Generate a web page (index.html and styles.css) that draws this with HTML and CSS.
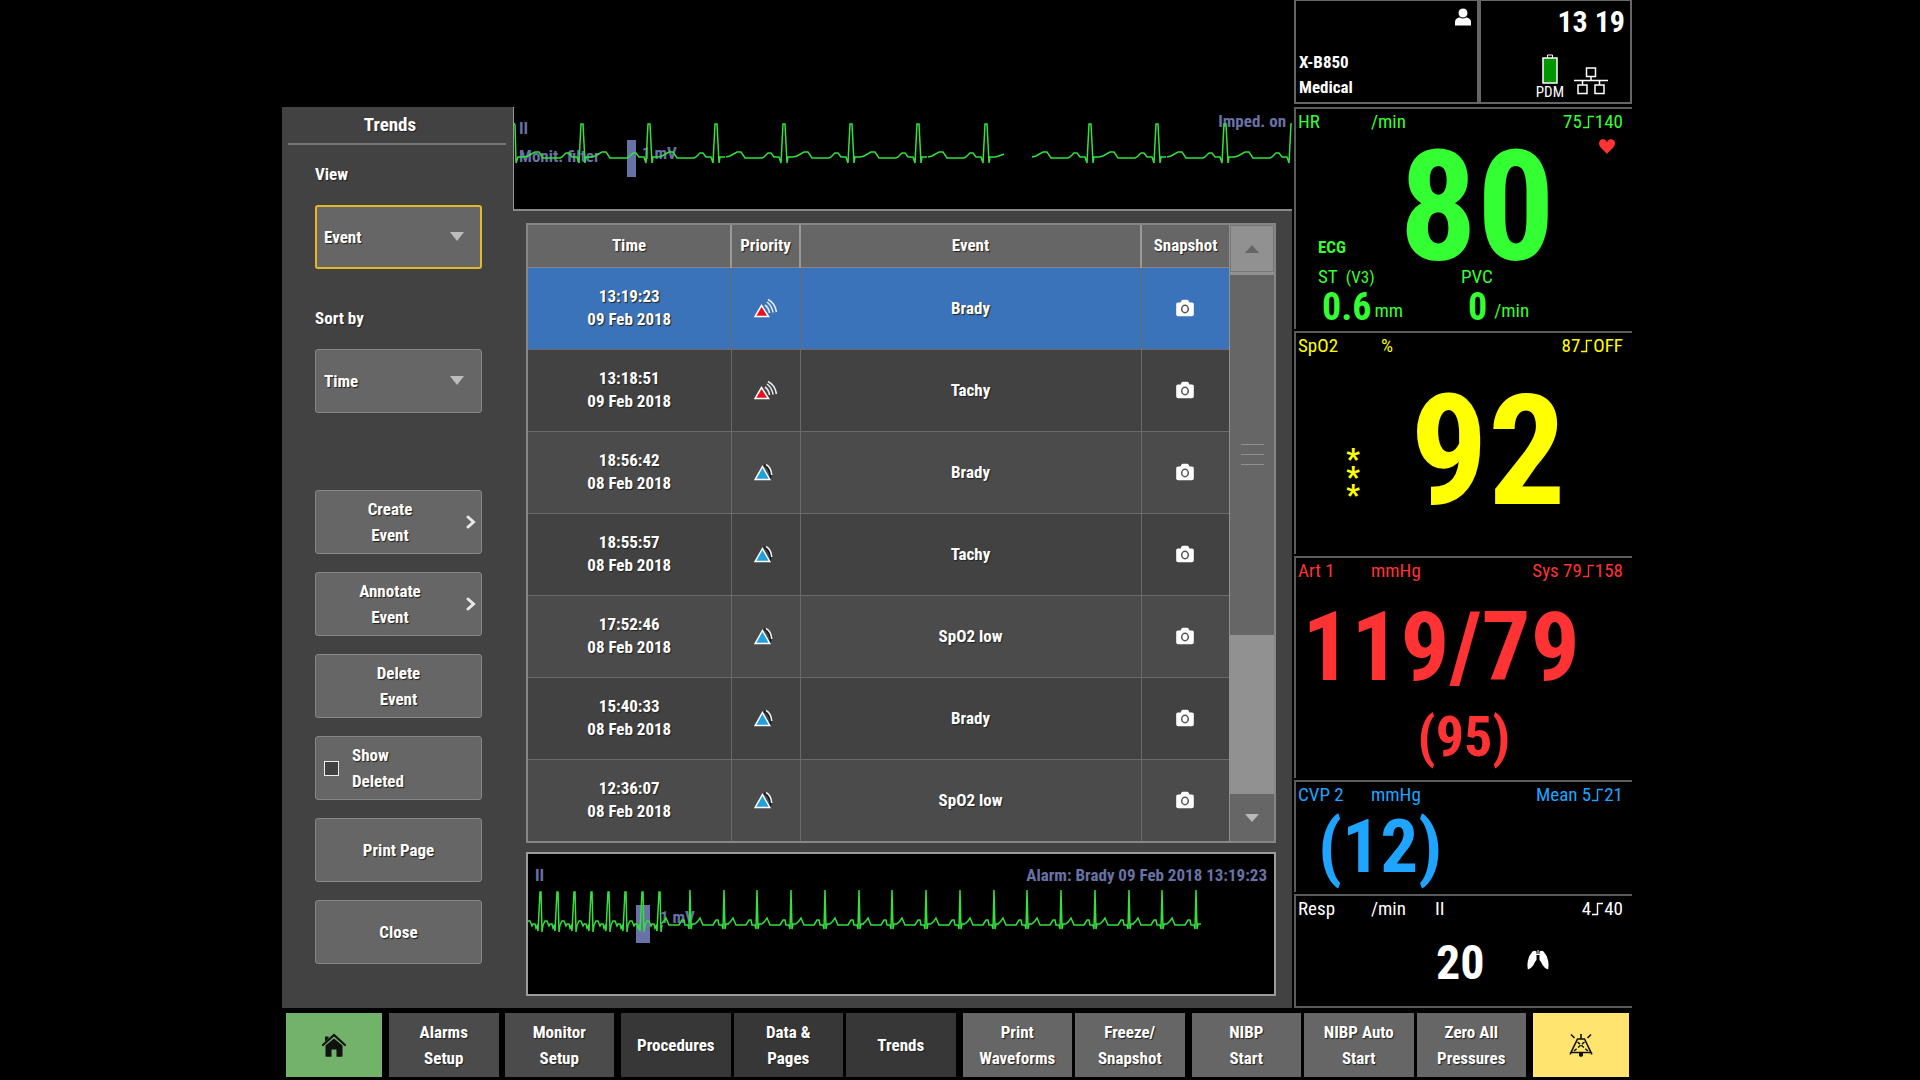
FILE: index.html
```html
<!DOCTYPE html>
<html lang="en">
<head>
<meta charset="utf-8">
<meta name="viewport" content="width=device-width, initial-scale=1">
<title>Trends</title>
<link rel="stylesheet" href="styles.css">
</head>
<body>
<svg class="defs" aria-hidden="true">
  <defs>
    <path id="beat" d="M-58 50 L-54 49 L-47 45 L-43 45 L-39 51 L-22 51 L-20 50 L-16 46 L-13 46 L-10 50 L-5 50 L-3 56 L-1 17 L1 17 L3 56 L4 50 L9 50"/>
    <path id="beat-slow" d="M-29 70 L-26 67 L-24 64 L-21 71 L-11 71 L-8 66 L-6 66 L-5 71 L-2 71 L-1 75 L0 36 L1 75 L2 70 L5 70"/>
    <path id="beat-fast" d="M-14 71 L-12 67 L-10 67 L-8 72 L-7 70 L-5 70 L-4 74 L-3 72 L-2 77 L0 38 L1 38 L2 78 L3 71"/>
    <symbol id="prio-high" viewBox="0 0 24 20">
      <path d="M7.500 7.500 L14.500 18.500 H1 Z" fill="#e8131a" stroke="#fff" stroke-width="1.500"/>
      <path d="M11 7 Q15 10 15.500 15 M13 4 Q18 8 19 14.500 M14 1.500 Q21 5 22.500 14" fill="none" stroke="#e4e9ef" stroke-width="1.600"/>
    </symbol>
    <symbol id="prio-low" viewBox="0 0 24 20">
      <path d="M10 3 Q15 5 16.500 12 Q17 15 15.500 17" fill="none" stroke="#1b1b1b" stroke-width="2"/>
      <path d="M12 2.500 Q17 5 17.700 13" fill="none" stroke="#eee" stroke-width="1.600"/>
      <path d="M8.500 4.500 L15.800 17.500 H1.200 Z" fill="#22a0dc" stroke="#fff" stroke-width="1.500"/>
    </symbol>
    <symbol id="camera" viewBox="0 0 18 18">
      <path d="M2 3.500 H4.500 L5.500 1.500 Q6 .8 7 .8 H11 Q12 .8 12.500 1.500 L13.500 3.500 H16 Q17.800 3.500 17.800 5 V15.500 Q17.800 17.300 16 17.300 H2 Q.2 17.300 .2 15.500 V5 Q.2 3.500 2 3.500 Z" fill="#fff"/>
      <ellipse cx="9" cy="10" rx="3.300" ry="3.700" fill="none" stroke="#555" stroke-width="1.500"/>
    </symbol>
    <symbol id="step" viewBox="0 0 11 14">
      <path d="M0 12.500 H5.500 V1.500 H11" fill="none" stroke="currentColor" stroke-width="1.400"/>
    </symbol>
    <symbol id="chevron" viewBox="0 0 10 14">
      <path d="M2 2 L7.500 7 L2 12" fill="none" stroke="#e8e8e8" stroke-width="3" stroke-linecap="round"/>
    </symbol>
  </defs>
</svg>

<div class="monitor">
  <main class="workspace">
    <form class="sidebar">
      <h1 class="sidebar-title">Trends</h1>
      <div class="controls">
        <label class="field-label" for="view">View</label>
        <div class="select-wrap">
          <select id="view" class="box select focused"><option>Event</option></select>
        </div>
        <label class="field-label" for="sort">Sort by</label>
        <div class="select-wrap">
          <select id="sort" class="box select"><option>Time</option></select>
        </div>
        <div class="actions">
          <button type="button" class="box more"><span>Create<br>Event</span><svg class="chevron"><use href="#chevron"/></svg></button>
          <button type="button" class="box more"><span>Annotate<br>Event</span><svg class="chevron"><use href="#chevron"/></svg></button>
          <button type="button" class="box">Delete<br>Event</button>
          <label class="box check"><input type="checkbox" class="tick"><span>Show<br>Deleted</span></label>
          <button type="button" class="box">Print Page</button>
          <button type="button" class="box">Close</button>
        </div>
      </div>
    </form>

    <div class="content">
      <svg class="live-wave" role="img" aria-label="ECG lead II">
        <g class="wave-text">
          <text x="5" y="27">II</text>
          <text x="5" y="55">Monit. filter</text>
          <text x="128" y="52">1 mV</text>
          <text x="100%" y="20" dx="-6" text-anchor="end">Imped. on</text>
          <rect x="113" y="33" width="9" height="37"/>
        </g>
        <g class="trace">
          <path d="M0 16 L1 18 L2 56 L4 50 L10 50"/>
          <use href="#beat" x="68"/><use href="#beat" x="135"/><use href="#beat" x="202"/><use href="#beat" x="270"/><use href="#beat" x="337"/><use href="#beat" x="404"/><use href="#beat" x="472"/>
          <path d="M481 50 L485 49 L490 47"/>
          <use href="#beat" x="576"/><use href="#beat" x="643"/><use href="#beat" x="711"/><use href="#beat" x="778"/>
        </g>
      </svg>

      <div class="events">
        <div class="table-frame">
          <table class="event-table">
            <thead>
              <tr><th class="c-time">Time</th><th class="c-prio">Priority</th><th>Event</th><th class="c-snap">Snapshot</th></tr>
            </thead>
            <tbody>
              <tr class="selected"><td>13:19:23<br>09 Feb 2018</td><td><svg class="prio"><use href="#prio-high"/></svg></td><td>Brady</td><td><svg class="camera"><use href="#camera"/></svg></td></tr>
              <tr><td>13:18:51<br>09 Feb 2018</td><td><svg class="prio"><use href="#prio-high"/></svg></td><td>Tachy</td><td><svg class="camera"><use href="#camera"/></svg></td></tr>
              <tr><td>18:56:42<br>08 Feb 2018</td><td><svg class="prio"><use href="#prio-low"/></svg></td><td>Brady</td><td><svg class="camera"><use href="#camera"/></svg></td></tr>
              <tr><td>18:55:57<br>08 Feb 2018</td><td><svg class="prio"><use href="#prio-low"/></svg></td><td>Tachy</td><td><svg class="camera"><use href="#camera"/></svg></td></tr>
              <tr><td>17:52:46<br>08 Feb 2018</td><td><svg class="prio"><use href="#prio-low"/></svg></td><td>SpO2 low</td><td><svg class="camera"><use href="#camera"/></svg></td></tr>
              <tr><td>15:40:33<br>08 Feb 2018</td><td><svg class="prio"><use href="#prio-low"/></svg></td><td>Brady</td><td><svg class="camera"><use href="#camera"/></svg></td></tr>
              <tr><td>12:36:07<br>08 Feb 2018</td><td><svg class="prio"><use href="#prio-low"/></svg></td><td>SpO2 low</td><td><svg class="camera"><use href="#camera"/></svg></td></tr>
            </tbody>
          </table>
          <div class="scrollbar">
            <button type="button" class="scroll-btn up" aria-label="Scroll up"><svg viewBox="0 0 16 10"><path d="M8 1 L15 9 H1 Z" fill="#666"/></svg></button>
            <div class="thumb"><i></i><i></i><i></i></div>
            <div class="track"></div>
            <button type="button" class="scroll-btn down" aria-label="Scroll down"><svg viewBox="0 0 16 10"><path d="M1 1 H15 L8 9 Z" fill="#b9b9b9"/></svg></button>
          </div>
        </div>

        <svg class="snapshot-wave" role="img" aria-label="Snapshot of ECG lead II">
          <g class="wave-text">
            <text x="7" y="27">II</text>
            <text x="132" y="69">1 mV</text>
            <text x="100%" y="27" dx="-7" text-anchor="end">Alarm: Brady 09 Feb 2018 13:19:23</text>
            <rect x="108" y="51" width="14" height="38"/>
          </g>
          <g class="trace">
            <use href="#beat-fast" x="12"/><use href="#beat-fast" x="29"/><use href="#beat-fast" x="46"/><use href="#beat-fast" x="63"/><use href="#beat-fast" x="80"/><use href="#beat-fast" x="97"/><use href="#beat-fast" x="114"/><use href="#beat-fast" x="131"/>
            <use href="#beat-slow" x="162"/><use href="#beat-slow" x="196"/><use href="#beat-slow" x="229"/><use href="#beat-slow" x="263"/><use href="#beat-slow" x="297"/><use href="#beat-slow" x="331"/><use href="#beat-slow" x="364"/><use href="#beat-slow" x="398"/><use href="#beat-slow" x="432"/><use href="#beat-slow" x="466"/><use href="#beat-slow" x="499"/><use href="#beat-slow" x="533"/><use href="#beat-slow" x="567"/><use href="#beat-slow" x="601"/><use href="#beat-slow" x="634"/><use href="#beat-slow" x="668"/>
          </g>
        </svg>
      </div>
    </div>
  </main>

  <aside class="vitals">
    <div class="status">
      <div class="patient">
        <svg class="person" viewBox="0 0 16 18"><path d="M0 17.500 V14 Q0 10.500 4 9.500 H12 Q16 10.500 16 14 V17.500 Z" fill="#fff"/><circle cx="8" cy="5" r="5" fill="#fff" stroke="#000"/></svg>
        <p>X-B850<br>Medical</p>
      </div>
      <div class="system">
        <time class="clock">13 19</time>
        <div class="system-icons">
          <div class="pdm">
            <svg class="battery" viewBox="0 0 16 30"><path d="M5.500 4 V1 H10.500 V4" fill="none" stroke="#fff"/><rect x="1" y="4" width="14" height="25" fill="#009400" stroke="#fff" stroke-width="1.500"/></svg>
            <span>PDM</span>
          </div>
          <svg class="network" viewBox="0 0 34 28"><path d="M0 13.500 H34 M17 9.500 V13.500 M8.500 13.500 V18 M25.500 13.500 V18 M12.500 1 H21.500 V9.500 H12.500 Z M4 18 H13 V26.500 H4 Z M21 18 H30 V26.500 H21 Z" fill="none" stroke="#fff" stroke-width="1.500"/></svg>
        </div>
      </div>
    </div>

    <section class="vital tall hr">
      <header class="vital-head"><span>HR</span><span>/min</span><span></span><span class="limits">75<svg class="step"><use href="#step"/></svg>140</span></header>
      <div class="hr-main">
        <span class="source">ECG</span>
        <span class="n-xl">80</span>
        <svg class="heart" viewBox="0 0 16 15"><path d="M8 15 C5 11 0 8.500 0 4.300 C0 1.500 2 .3 4 .3 C6 .3 7.500 1.500 8 3.500 C8.500 1.500 10 .3 12 .3 C14 .3 16 1.500 16 4.300 C16 8.500 11 11 8 15 Z" fill="#ff3333"/></svg>
      </div>
      <div class="hr-stats">
        <div>
          <p class="stat-name">ST <small>(V3)</small></p>
          <p class="stat-value indent"><b>0.6</b><span>mm</span></p>
        </div>
        <div>
          <p class="stat-name">PVC</p>
          <p class="stat-value pvc"><b>0</b><span>/min</span></p>
        </div>
      </div>
    </section>

    <section class="vital tall spo2">
      <header class="vital-head"><span>SpO2</span><span class="pct">%</span><span></span><span class="limits">87<svg class="step"><use href="#step"/></svg>OFF</span></header>
      <div class="spo2-main">
        <span class="stars">*<br>*<br>*</span>
        <span class="n-xl">92</span>
      </div>
    </section>

    <section class="vital tall art">
      <header class="vital-head"><span>Art 1</span><span>mmHg</span><span></span><span class="limits">Sys 79<svg class="step"><use href="#step"/></svg>158</span></header>
      <p class="n-l">119/79</p>
      <p class="n-m">(95)</p>
    </section>

    <section class="vital cvp">
      <header class="vital-head"><span>CVP 2</span><span>mmHg</span><span></span><span class="limits">Mean 5<svg class="step"><use href="#step"/></svg>21</span></header>
      <p class="n-cvp">(12)</p>
    </section>

    <section class="vital resp">
      <header class="vital-head"><span>Resp</span><span>/min</span><span>II</span><span class="limits">4<svg class="step"><use href="#step"/></svg>40</span></header>
      <div class="resp-main">
        <span class="n-s">20</span>
        <svg class="lungs" viewBox="0 0 22 20"><path d="M9.500 1.500 V10 Q7.500 12 6.500 15 Q4.500 18.500 .8 19.500 Q0 15 .8 11 Q2 5 5.500 1.500 Q7.500 0 9.500 1.500 Z M12.500 1.500 V10 Q14.500 12 15.500 15 Q17.500 18.500 21.200 19.500 Q22 15 21.200 11 Q20 5 16.500 1.500 Q14.500 0 12.500 1.500 Z" fill="#fff"/><path d="M11 0 V5 M9 4.500 H13" stroke="#fff"/></svg>
      </div>
    </section>
  </aside>

  <nav class="menu">
    <button type="button" class="key home" aria-label="Home"><svg viewBox="0 0 24 24"><path d="M12 5.500 L20.500 12.500 V23 Q20.500 23.700 19.500 23.700 H14.500 V16.500 H9.500 V23.700 H4.500 Q3.500 23.700 3.500 23 V12.500 Z" fill="#111"/><path d="M1 12 L12 2 L23 12" fill="none" stroke="#111" stroke-width="2.200" stroke-linecap="round"/><path d="M3 3.500 H6.500 V5.500 L3 8.500 Z" fill="#111"/></svg></button>
    <button type="button" class="key mid group">Alarms<br>Setup</button>
    <button type="button" class="key mid near">Monitor<br>Setup</button>
    <button type="button" class="key dark group">Procedures</button>
    <button type="button" class="key dark">Data &amp;<br>Pages</button>
    <button type="button" class="key dark">Trends</button>
    <button type="button" class="key group">Print<br>Waveforms</button>
    <button type="button" class="key">Freeze/<br>Snapshot</button>
    <button type="button" class="key group">NIBP<br>Start</button>
    <button type="button" class="key">NIBP Auto<br>Start</button>
    <button type="button" class="key">Zero All<br>Pressures</button>
    <button type="button" class="key silence group" aria-label="Silence alarms"><svg viewBox="0 0 24 24"><path d="M12 1 V6 M2 1.500 L5.500 5 M22 1.500 L18.500 5 M8.500 6 H15.500 L22 19.500 H2 Z M1.500 19.500 V21.500 M22.500 19.500 V21.500" fill="none" stroke="#111" stroke-width="1.600"/><path d="M5 18 L15.500 9 M19 18 L8.500 9" stroke="#111" stroke-width="1.500" stroke-dasharray="3.500 1.800"/><path d="M10 20 H14 V23 L12 24 L10 23 Z" fill="#111"/></svg></button>
  </nav>
</div>
</body>
</html>
```
FILE: styles.css
```css
:root {
  --panel: #424242;
  --panel-alt: #4b4b4b;
  --control: #666;
  --edge: #868686;
  --line: #999;
  --note: #6872a6;
}

* {
  box-sizing: border-box;
}

body,
h1,
p {
  margin: 0;
}

body {
  background: #000;
  color: #fff;
  font-family: "Liberation Sans Narrow", "Arial Narrow", "Roboto Condensed", "Liberation Sans", sans-serif;
  font-size: 17px;
  font-weight: 700;
}

svg {
  display: block;
}

button,
select {
  font: inherit;
  color: inherit;
}

.defs {
  position: absolute;
  width: 0;
  height: 0;
}

.monitor {
  display: grid;
  grid-template-columns: minmax(0, 1fr) 338px;
  grid-template-rows: 1fr auto;
  column-gap: 2px;
  min-height: 100vh;
  padding: 0 288px 0 282px;
}

/* Trends page */

.workspace {
  display: flex;
  margin-top: 107px;
  background: var(--panel);
}

.sidebar {
  flex: 0 0 231px;
  text-shadow: 1px 1px 1px #222;
}

.sidebar-title {
  margin: 0 7px 0 6px;
  padding: 5px 14px 6px 0;
  border-bottom: 2px solid #777;
  font-size: 19px;
  line-height: 25px;
  text-align: center;
}

.controls {
  display: flex;
  flex-direction: column;
  margin: 0 31px 0 33px;
}

.field-label {
  margin-top: 17px;
  line-height: 24px;
}

.select-wrap {
  position: relative;
  margin: 19px 0;
}

.select-wrap::after {
  content: "";
  position: absolute;
  right: 18px;
  top: 27px;
  border: 7px solid transparent;
  border-top: 9px solid #bdbdbd;
  border-bottom: 0;
  pointer-events: none;
}

.box {
  display: block;
  width: 100%;
  height: 64px;
  padding: 0 8px;
  border: 1px solid var(--edge);
  border-radius: 3px;
  background: var(--control);
  line-height: 26px;
  text-align: center;
  text-shadow: inherit;
}

.select {
  appearance: none;
  text-align: left;
}

.focused {
  border: 2px solid #e3b92c;
  padding: 0 7px;
}

.select-wrap + .field-label {
  margin-top: 18px;
}

.actions {
  display: flex;
  flex-direction: column;
  gap: 18px;
  margin-top: 58px;
}

.more {
  display: grid;
  grid-template-columns: 1fr 10px;
  align-items: center;
  column-gap: 8px;
  padding: 0 5px 0 6px;
}

.chevron {
  width: 10px;
  height: 14px;
}

.check {
  display: flex;
  align-items: center;
  gap: 13px;
  text-align: left;
}

.tick {
  appearance: none;
  width: 15px;
  height: 15px;
  margin: 0;
  border: 1px solid #eee;
  background: var(--panel);
}

.content {
  flex: 1;
  min-width: 0;
}

.live-wave {
  width: 100%;
  height: 104px;
  border-left: 1px solid var(--line);
  border-bottom: 2px solid #888;
  background: #000;
}

.wave-text {
  fill: var(--note);
}

.trace {
  fill: none;
  stroke: #33e03c;
  stroke-width: 1.5;
}

.events {
  padding: 12px 16px 12px 13px;
}

.table-frame {
  display: flex;
  border: 2px solid var(--edge);
}

.event-table {
  flex: 1;
  border-collapse: collapse;
  table-layout: fixed;
  line-height: 23px;
  text-align: center;
  text-shadow: 1px 1px 1px #222;
}

.c-time { width: 203px; }
.c-prio { width: 69px; }
.c-snap { width: 88px; }

.event-table th {
  height: 42px;
  padding: 0;
  background: var(--control);
  border-left: 2px solid var(--line);
  border-bottom: 1px solid var(--edge);
}

.event-table td {
  height: 82px;
  padding: 0;
  border-left: 1px solid #6a6a6a;
  border-top: 1px solid #6a6a6a;
}

.event-table th:first-child,
.event-table td:first-child {
  border-left: 0;
}

.event-table tbody tr:nth-child(odd) {
  background: var(--panel-alt);
}

.event-table tbody tr.selected {
  background: #3a73b9;
}

.prio {
  width: 24px;
  height: 20px;
  margin: 0 auto;
}

.camera {
  width: 18px;
  height: 18px;
  margin: 0 auto;
}

.scrollbar {
  display: flex;
  flex-direction: column;
  flex: 0 0 45px;
  padding-left: 1px;
  background: #919191;
}

.scroll-btn {
  flex: 0 0 47px;
  padding: 0;
  border: 1px solid #777;
  background: #919191;
}

.scroll-btn.down {
  border: 0;
  background: var(--control);
}

.scroll-btn svg {
  width: 16px;
  height: 10px;
  margin: 0 auto;
}

.thumb {
  display: flex;
  flex: 359;
  flex-direction: column;
  align-items: center;
  justify-content: center;
  gap: 9px;
  margin-top: 3px;
  background: var(--control);
}

.thumb i {
  width: 23px;
  height: 1px;
  background: #919191;
}

.track {
  flex: 159;
}

.snapshot-wave {
  width: 100%;
  height: 144px;
  margin-top: 9px;
  border: 2px solid #9c9c9c;
  background: #000;
}

/* Vital signs */

.vitals {
  display: flex;
  flex-direction: column;
  gap: 2px;
}

.status {
  display: grid;
  grid-template-columns: 185px 1fr;
  height: 104px;
  margin-bottom: 1px;
}

.patient,
.system {
  display: flex;
  flex-direction: column;
  justify-content: space-between;
  align-items: flex-end;
  border: 2px solid #666;
  border-top-width: 1px;
}

.patient {
  padding: 7px 6px 2px 3px;
}

.patient p {
  align-self: flex-start;
  line-height: 25px;
}

.person {
  width: 16px;
  height: 18px;
}

.system {
  padding: 5px 5px 2px 0;
}

.clock {
  font-size: 30px;
  line-height: 32px;
}

.system-icons {
  display: flex;
  align-items: flex-end;
  gap: 10px;
  padding-right: 17px;
}

.pdm {
  display: flex;
  flex-direction: column;
  align-items: center;
  font-size: 15px;
  font-weight: 400;
  line-height: 16px;
}

.battery {
  width: 16px;
  height: 30px;
}

.network {
  width: 34px;
  height: 28px;
  margin-bottom: 5px;
}

.vital {
  flex: 1 1 0;
  border-top: 2px solid #5c5c5c;
  border-left: 2px solid #5c5c5c;
}

.tall {
  flex-grow: 2;
}

.hr { color: #33ff33; }
.spo2 { color: #ffff00; }
.art { color: #ff3333; }
.cvp { color: #1fa5ff; }

.resp {
  border-bottom: 2px solid #5c5c5c;
}

.vital-head {
  display: grid;
  grid-template-columns: 73px 64px 1fr auto;
  padding: 0 9px 0 2px;
  font-size: 19px;
  font-weight: 400;
  line-height: 26px;
}

.pct {
  padding-left: 10px;
}

.limits {
  display: flex;
  align-items: center;
  gap: 1px;
}

.step {
  width: 11px;
  height: 14px;
}

.n-xl {
  font-size: 154px;
  line-height: 114px;
  text-align: center;
}

.hr-main {
  display: grid;
  grid-template-columns: 96px 1fr 70px;
}

.hr-main .n-xl {
  margin-top: 16px;
}

.source {
  align-self: end;
  padding-left: 22px;
  line-height: 36px;
}

.heart {
  width: 16px;
  height: 15px;
  margin: 4px 17px 0 auto;
}

.hr-stats {
  display: grid;
  grid-template-columns: 143px 1fr;
  padding-left: 22px;
  font-size: 19px;
  font-weight: 400;
}

.stat-name {
  line-height: 24px;
}

.stat-name small {
  margin-left: 4px;
  font-size: 17px;
}

.stat-value {
  display: flex;
  align-items: flex-end;
  gap: 3px;
  line-height: 28px;
}

.stat-value b {
  font-size: 38px;
  line-height: 36px;
}

.indent {
  padding-left: 4px;
}

.pvc {
  gap: 7px;
  padding-left: 7px;
}

.spo2-main {
  display: grid;
  grid-template-columns: 100px 1fr 52px;
  align-items: center;
  padding-top: 36px;
}

.stars {
  margin-top: 50px;
  padding-left: 14px;
  font-size: 30px;
  line-height: 18px;
  text-align: center;
}

.n-l {
  padding-right: 46px;
  font-size: 97px;
  line-height: 126px;
  text-align: center;
}

.n-m {
  font-size: 56px;
  line-height: 54px;
  text-align: center;
}

.n-cvp {
  padding-left: 22px;
  font-size: 75px;
  line-height: 76px;
}

.resp-main {
  display: flex;
  align-items: center;
  gap: 42px;
  padding: 16px 0 0 140px;
}

.n-s {
  font-size: 48px;
  line-height: 50px;
}

.lungs {
  width: 22px;
  height: 20px;
  margin-bottom: 6px;
}

/* Main menu keys */

.menu {
  display: flex;
  grid-column: 1 / -1;
  gap: 3px;
  padding: 5px 3px 3px 4px;
}

.key {
  flex: 1 1 0;
  height: 64px;
  padding: 0;
  border: 0;
  background: var(--control);
  line-height: 26px;
  text-shadow: 1px 1px 1px #222;
}

.key.mid { background: var(--panel-alt); }
.key.dark { background: #373737; }

.key.group { margin-left: 4px; }
.key.near { margin-left: 3px; }

.key.home,
.key.silence {
  flex: 0 0 96px;
  background: #72b26b;
}

.key.silence {
  background: #ffe570;
}

.key svg {
  width: 24px;
  height: 24px;
  margin: 0 auto;
}
```
